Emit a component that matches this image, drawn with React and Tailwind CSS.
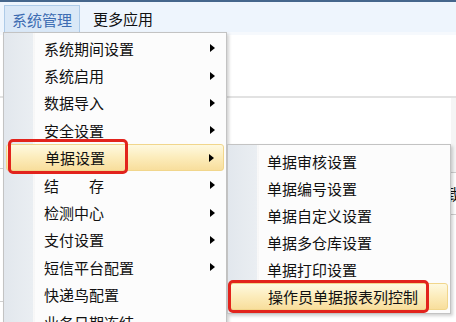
import React from 'react';

const mainItems = [
  { label: '系统期间设置', sub: true },
  { label: '系统启用', sub: true },
  { label: '数据导入', sub: true },
  { label: '安全设置', sub: true },
  { label: '单据设置', sub: true, active: true },
  { label: '结　　存', sub: true },
  { label: '检测中心', sub: true },
  { label: '支付设置', sub: true },
  { label: '短信平台配置', sub: true },
  { label: '快递鸟配置', sub: false },
  { label: '业务日期冻结', sub: false },
];

const subItems = [
  { label: '单据审核设置' },
  { label: '单据编号设置' },
  { label: '单据自定义设置' },
  { label: '单据多仓库设置' },
  { label: '单据打印设置' },
  { label: '操作员单据报表列控制', active: true },
];

const Arrow = () => (
  <span className="ml-auto mr-[9px] h-0 w-0 border-y-[4px] border-l-[5px] border-y-transparent border-l-black" />
);

const App = () => {
  return (
    <div className="relative h-[322px] w-[456px] overflow-hidden bg-white font-['Noto_Sans_CJK_SC','Noto_Sans',sans-serif] text-[15px] text-[#111]">
      {/* top menu bar */}
      <div className="flex h-[32px] items-end gap-[13px] border-t-2 border-[#45668c] bg-[#eef5fd] pl-[4px]">
        <div className="flex h-[27px] w-[76px] items-center justify-center border border-b-0 border-[#aecbe8] bg-[#dae8f7] leading-none text-[#3d6cb2]">
          系统管理
        </div>
        <div className="flex h-[27px] items-center leading-none">更多应用</div>
      </div>
      <div className="h-[3px] bg-[#f6f9fd]" />

      {/* page behind the menus */}
      <div className="h-[63px] border-b-2 border-[#e2e2e2] bg-white" />
      <div className="flex">
        <div className="w-[4px]">
          <div className="h-[71px] border-b border-[#d0d0d0]" />
          <div className="h-[133px] border-b border-[#d0d0d0]" />
        </div>
        <div className="flex-1" />
        <div className="w-[6px] pl-[1px]">
          <div className="h-[75px] border-b border-[#cfcfcf] bg-[#f5f5f5]" />
          <div className="flex h-[42px] items-center overflow-hidden border-b border-[#cfcfcf] leading-none">
            <span className="-ml-[6px]">载</span>
          </div>
        </div>
      </div>

      {/* main dropdown */}
      <div className="absolute left-[3px] top-[32px] h-[310px] w-[224px] border border-[#c3c3c3] bg-[linear-gradient(to_right,#e2e7ed_0px,#eaeef2_29px,#ffffff_29px,#f1f1f1_30px,#fcfcfc_31px)] pt-[1.5px] shadow-[2px_2px_3px_rgba(0,0,0,0.18)]">
        {mainItems.map((item) => (
          <div
            key={item.label}
            className={`relative mx-[2px] flex h-[27.4px] items-center pl-[38px] leading-none ${
              item.active
                ? 'rounded-[3px] border border-[#f1d68c] bg-[linear-gradient(to_bottom,#fef9e0,#fcecbb_50%,#f8de9c)] pl-[37px]'
                : ''
            }`}
          >
            <span>{item.label}</span>
            {item.sub && <Arrow />}
            {item.active && (
              <span className="absolute -top-[6px] left-[1px] h-[35px] w-[120px] rounded-[5px] border-[3px] border-[#e2231c]" />
            )}
          </div>
        ))}
      </div>

      {/* sub dropdown */}
      <div className="absolute left-[227px] top-[144px] h-[170px] w-[224px] border border-[#c3c3c3] bg-[linear-gradient(to_right,#e2e7ed_0px,#eaeef2_29px,#ffffff_29px,#f1f1f1_30px,#fcfcfc_31px)] pt-[2.5px] shadow-[2px_2px_3px_rgba(0,0,0,0.18)]">
        {subItems.map((item) => (
          <div
            key={item.label}
            className={`relative mx-[2px] flex h-[27px] items-center pl-[37px] leading-none ${
              item.active
                ? 'rounded-[3px] border border-[#f1d68c] bg-[linear-gradient(to_bottom,#fef9e0,#fcecbb_50%,#f8de9c)] pl-[36px]'
                : ''
            }`}
          >
            <span>{item.label}</span>
            {item.active && (
              <span className="absolute -left-[3px] -top-[4px] h-[33px] w-[201px] rounded-[5px] border-[3px] border-[#e2231c]" />
            )}
          </div>
        ))}
      </div>
    </div>
  );
};

export default App;
